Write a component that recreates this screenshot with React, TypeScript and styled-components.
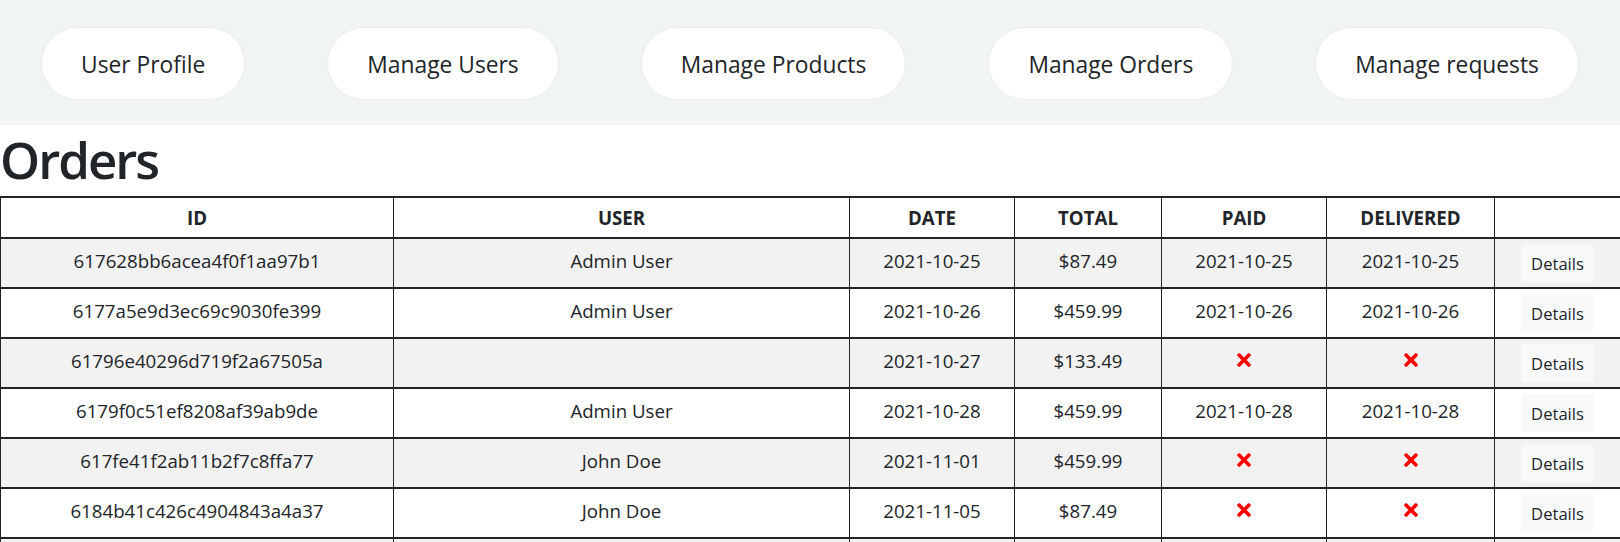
import React from "react";
import styled, { createGlobalStyle } from "styled-components";
import { FaTimes } from "react-icons/fa";

const GlobalStyle = createGlobalStyle`
  html, body {
    margin: 0;
    padding: 0;
    background: #ffffff;
    color: #212529;
    font-family: "Open Sans", "Noto Sans", "Liberation Sans", sans-serif;
  }
  * { box-sizing: border-box; }
`;

const NavBar = styled.nav`
  display: flex;
  justify-content: space-around;
  align-items: center;
  height: 125px;
  padding: 2px 0 0;
  background: #f0f4f4;
`;

const NavButton = styled.button`
  height: 73px;
  padding: 4px 39px 0;
  border: 1px solid #ececec;
  border-radius: 37px;
  background: #ffffff;
  color: #212529;
  font-family: "Open Sans", "Noto Sans", sans-serif;
  font-size: 22.8px;
  line-height: 1.5;
  cursor: pointer;
`;

const Title = styled.h1`
  margin: 0 0 8px;
  height: 63px;
  padding-top: 4px;
  font-size: 51px;
  line-height: 60px;
  font-weight: 600;
  color: #212529;
  letter-spacing: -2px;
`;

const Table = styled.table`
  width: 1620px;
  table-layout: fixed;
  border-collapse: collapse;
  font-size: 18.7px;
  line-height: 30px;
  color: #212529;
`;

const HeadCell = styled.th`
  padding: 5px 5px 4px;
  text-align: center;
  vertical-align: top;
  font-weight: 700;
  text-transform: uppercase;
  border-left: 1px solid #212529;
  border-right: 1px solid #212529;
  border-top: 2px solid #212529;
  border-bottom: 2px solid #212529;
`;

const Row = styled.tr<{ $striped: boolean }>`
  background: ${(p) => (p.$striped ? "#f2f2f2" : "#ffffff")};
`;

const Cell = styled.td<{ $action?: boolean }>`
  height: 50px;
  padding: ${(p) => (p.$action ? "5px" : "7px 5px 3px")};
  text-align: center;
  vertical-align: top;
  border-left: 1px solid #212529;
  border-right: 1px solid #212529;
  border-top: 2px solid #212529;
  border-bottom: 2px solid #212529;
`;

const NoMark = styled.span`
  display: inline-flex;
  align-items: center;
  justify-content: center;
  height: 28px;
  color: #ff0000;
`;

const DetailsButton = styled.button`
  height: 38px;
  padding: 2px 10px 0;
  border: none;
  border-radius: 4px;
  background: #f8f9fa;
  color: #212529;
  font-family: "Open Sans", "Noto Sans", sans-serif;
  font-size: 16.6px;
  line-height: 36px;
  cursor: pointer;
`;

type Order = {
  id: string;
  user: string;
  date: string;
  total: string;
  paid: string | null;
  delivered: string | null;
};

const orders: Order[] = [
  { id: "617628bb6acea4f0f1aa97b1", user: "Admin User", date: "2021-10-25", total: "$87.49", paid: "2021-10-25", delivered: "2021-10-25" },
  { id: "6177a5e9d3ec69c9030fe399", user: "Admin User", date: "2021-10-26", total: "$459.99", paid: "2021-10-26", delivered: "2021-10-26" },
  { id: "61796e40296d719f2a67505a", user: "", date: "2021-10-27", total: "$133.49", paid: null, delivered: null },
  { id: "6179f0c51ef8208af39ab9de", user: "Admin User", date: "2021-10-28", total: "$459.99", paid: "2021-10-28", delivered: "2021-10-28" },
  { id: "617fe41f2ab11b2f7c8ffa77", user: "John Doe", date: "2021-11-01", total: "$459.99", paid: null, delivered: null },
  { id: "6184b41c426c4904843a4a37", user: "John Doe", date: "2021-11-05", total: "$87.49", paid: null, delivered: null },
];

const columns = [
  { label: "ID", width: 393 },
  { label: "User", width: 456 },
  { label: "Date", width: 165 },
  { label: "Total", width: 147 },
  { label: "Paid", width: 165 },
  { label: "Delivered", width: 168 },
  { label: "", width: 126 },
];

const navItems = ["User Profile", "Manage Users", "Manage Products", "Manage Orders", "Manage requests"];

const Status = ({ value }: { value: string | null }) =>
  value ? <>{value}</> : (
    <NoMark>
      <FaTimes size={20} />
    </NoMark>
  );

export default function App() {
  return (
    <>
      <GlobalStyle />
      <NavBar>
        {navItems.map((item) => (
          <NavButton key={item}>{item}</NavButton>
        ))}
      </NavBar>
      <Title>Orders</Title>
      <Table>
        <colgroup>
          {columns.map((c, i) => (
            <col key={i} style={{ width: c.width }} />
          ))}
        </colgroup>
        <thead>
          <tr>
            {columns.map((c, i) => (
              <HeadCell key={i}>{c.label}</HeadCell>
            ))}
          </tr>
        </thead>
        <tbody>
          {orders.map((o, i) => (
            <Row key={o.id} $striped={i % 2 === 0}>
              <Cell>{o.id}</Cell>
              <Cell>{o.user}</Cell>
              <Cell>{o.date}</Cell>
              <Cell>{o.total}</Cell>
              <Cell>
                <Status value={o.paid} />
              </Cell>
              <Cell>
                <Status value={o.delivered} />
              </Cell>
              <Cell $action>
                <DetailsButton>Details</DetailsButton>
              </Cell>
            </Row>
          ))}
          <Row $striped={true}>
            {columns.map((c, i) => (
              <Cell key={i} />
            ))}
          </Row>
        </tbody>
      </Table>
    </>
  );
}
